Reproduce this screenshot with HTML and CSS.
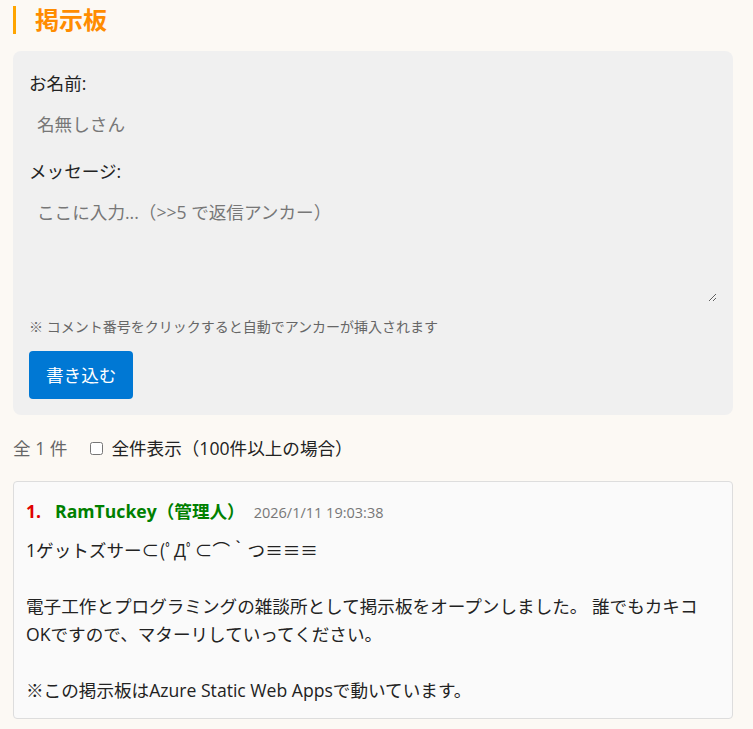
FILE: index.html
```html
<!DOCTYPE html>
<html lang="ja">
<head>
<meta charset="utf-8">
<title>掲示板</title>
<link rel="stylesheet" href="styles.css">
</head>
<body>
<div class="page">
  <h1 class="title">掲示板</h1>
  <form class="post-form">
    <div class="field">
      <label class="field-label" for="name">お名前:</label>
      <input class="text-input" id="name" type="text" placeholder="名無しさん">
    </div>
    <div class="field">
      <label class="field-label" for="msg">メッセージ:</label>
      <textarea class="text-area" id="msg" placeholder="ここに入力...（>>5 で返信アンカー）"></textarea>
    </div>
    <p class="note">※ コメント番号をクリックすると自動でアンカーが挿入されます</p>
    <button class="submit" type="button">書き込む</button>
  </form>
  <div class="summary">
    <span class="count">全 1 件</span>
    <label class="show-all"><input type="checkbox" class="check"> 全件表示（100件以上の場合）</label>
  </div>
  <div class="post">
    <div class="post-head">
      <span class="post-no">1.</span>
      <span class="post-name">RamTuckey（管理人）</span>
      <span class="post-date">2026/1/11 19:03:38</span>
    </div>
    <div class="post-body">1ゲットズサー⊂(ﾟДﾟ⊂⌒｀つ≡≡≡

電子工作とプログラミングの雑談所として掲示板をオープンしました。 誰でもカキコOKですので、マターリしていってください。

※この掲示板はAzure Static Web Appsで動いています。</div>
  </div>
</div>
</body>
</html>
```
FILE: styles.css
```css
html, body {
  margin: 0;
  padding: 0;
  background: #fcf9f4;
}
body {
  font-family: "Open Sans", "Noto Sans CJK JP", sans-serif;
  font-size: 17.6px;
  color: #222;
}
.page {
  width: 720px;
  padding: 0 20px 0 13px;
}
.title {
  margin: 6px 0 17px;
  border-left: 3px solid #ffa500;
  padding-left: 19px;
  font-size: 24px;
  line-height: 28px;
  font-weight: bold;
  color: #ff8c00;
}
.post-form {
  background: #f0f0f0;
  border-radius: 8px;
  padding: 18px 16px 16px;
}
.field {
  margin-bottom: 13px;
}
.field-label {
  display: block;
  line-height: 28px;
  margin-bottom: 7px;
  color: #222;
}
.text-input, .text-area {
  display: block;
  box-sizing: border-box;
  width: 100%;
  border: none;
  background: transparent;
  font-family: inherit;
  font-size: 17.6px;
  line-height: 24px;
  padding: 8px;
  color: #222;
  outline: none;
}
.text-area {
  height: 110px;
  resize: vertical;
}
.text-input::placeholder, .text-area::placeholder {
  color: #777;
}
.field:nth-of-type(2) {
  margin-bottom: 0;
}
.note {
  margin: 14px 0 13px;
  font-size: 14px;
  line-height: 22px;
  color: #666;
}
.submit {
  display: block;
  background: #0078d4;
  color: #fff;
  border: none;
  border-radius: 4px;
  font-family: inherit;
  font-size: 17.6px;
  line-height: 24px;
  padding: 12px 17px;
}
.summary {
  display: flex;
  align-items: center;
  margin: 19px 0;
  line-height: 28px;
}
.count {
  color: #666;
  margin-right: 20px;
}
.show-all {
  display: flex;
  align-items: center;
  color: #222;
}
.check {
  width: 13px;
  height: 13px;
  margin: 0 8px 0 3px;
}
.post {
  background: #fafafa;
  border: 1px solid #ddd;
  border-radius: 4px;
  padding: 12px 12px 14px;
}
.post-head {
  display: flex;
  align-items: baseline;
  line-height: 34px;
  margin-bottom: 6px;
}
.post-no {
  color: #e00000;
  font-weight: bold;
  margin-right: 14px;
}
.post-name {
  color: #008000;
  font-weight: bold;
  margin-right: 9px;
}
.post-date {
  color: #777;
  font-size: 14.5px;
}
.post-body {
  white-space: pre-wrap;
  line-height: 28px;
  color: #222;
}
```
